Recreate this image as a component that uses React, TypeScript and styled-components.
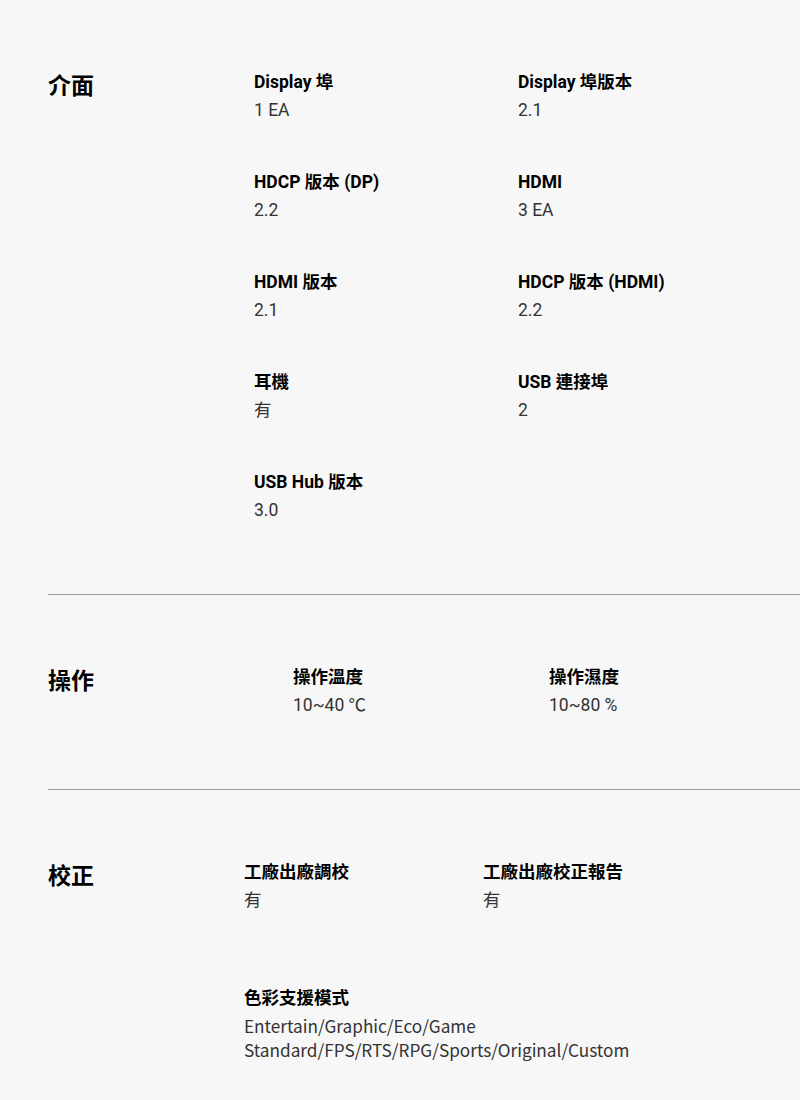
import React from "react";
import styled, { createGlobalStyle } from "styled-components";

const Global = createGlobalStyle`
  html, body { margin: 0; padding: 0; background: #f7f7f7; }
  body {
    font-family: Roboto, "Noto Sans CJK TC", sans-serif;
    color: #000;
    width: 800px;
    overflow: hidden;
  }
`;

const Page = styled.div`
  background: #f7f7f7;
  min-height: 1100px;
  padding-left: 48px;
`;

const Section = styled.section<{ $last?: boolean }>`
  display: flex;
  align-items: flex-start;
  padding: 70px 0 72px;
  border-bottom: ${(p) => (p.$last ? "none" : "1px solid #9a9a9a")};
`;

const Title = styled.h2<{ $width: number }>`
  flex: 0 0 ${(p) => p.$width}px;
  margin: 0;
  font-family: "Noto Sans CJK TC", sans-serif;
  font-size: 23px;
  line-height: 28px;
  font-weight: 700;
  color: #000;
`;

const Grid = styled.div<{ $col: number; $rowGap: number }>`
  display: grid;
  grid-template-columns: ${(p) => p.$col}px ${(p) => p.$col}px;
  row-gap: ${(p) => p.$rowGap}px;
`;

const Item = styled.div`
  display: flex;
  flex-direction: column;
  gap: 4px;
`;

const Label = styled.div`
  font-family: Roboto, "Noto Sans CJK TC", sans-serif;
  font-size: 17.5px;
  line-height: 24px;
  font-weight: 700;
  color: #000;
  white-space: nowrap;
`;

const Value = styled.div<{ $cjk?: boolean }>`
  font-family: ${(p) =>
    p.$cjk ? `"Noto Sans CJK TC", sans-serif` : `Roboto, "Noto Sans CJK TC", sans-serif`};
  font-size: ${(p) => (p.$cjk ? "17.2px" : "17.5px")};
  line-height: 24px;
  font-weight: 400;
  color: #333;
  white-space: pre-line;
`;

type Spec = { label: string; value: string; cjk?: boolean };

const interfaceSpecs: Spec[] = [
  { label: "Display 埠", value: "1 EA" },
  { label: "Display 埠版本", value: "2.1" },
  { label: "HDCP 版本 (DP)", value: "2.2" },
  { label: "HDMI", value: "3 EA" },
  { label: "HDMI 版本", value: "2.1" },
  { label: "HDCP 版本 (HDMI)", value: "2.2" },
  { label: "耳機", value: "有" },
  { label: "USB 連接埠", value: "2" },
  { label: "USB Hub 版本", value: "3.0" },
];

const operationSpecs: Spec[] = [
  { label: "操作溫度", value: "10~40 ℃" },
  { label: "操作濕度", value: "10~80 %" },
];

const calibrationSpecs: Spec[] = [
  { label: "工廠出廠調校", value: "有" },
  { label: "工廠出廠校正報告", value: "有" },
  {
    label: "色彩支援模式",
    value: "Entertain/Graphic/Eco/Game\nStandard/FPS/RTS/RPG/Sports/Original/Custom",
    cjk: true,
  },
];

const SpecSection: React.FC<{
  title: string;
  titleWidth: number;
  col: number;
  rowGap: number;
  specs: Spec[];
  last?: boolean;
}> = ({ title, titleWidth, col, rowGap, specs, last }) => (
  <Section $last={last}>
    <Title $width={titleWidth}>{title}</Title>
    <Grid $col={col} $rowGap={rowGap}>
      {specs.map((s) => (
        <Item key={s.label}>
          <Label>{s.label}</Label>
          <Value $cjk={s.cjk}>{s.value}</Value>
        </Item>
      ))}
    </Grid>
  </Section>
);

export default function App() {
  return (
    <>
      <Global />
      <Page>
        <SpecSection title="介面" titleWidth={206} col={264} rowGap={48} specs={interfaceSpecs} />
        <SpecSection title="操作" titleWidth={245} col={256} rowGap={48} specs={operationSpecs} />
        <SpecSection title="校正" titleWidth={196} col={239} rowGap={74} specs={calibrationSpecs} last />
      </Page>
    </>
  );
}
